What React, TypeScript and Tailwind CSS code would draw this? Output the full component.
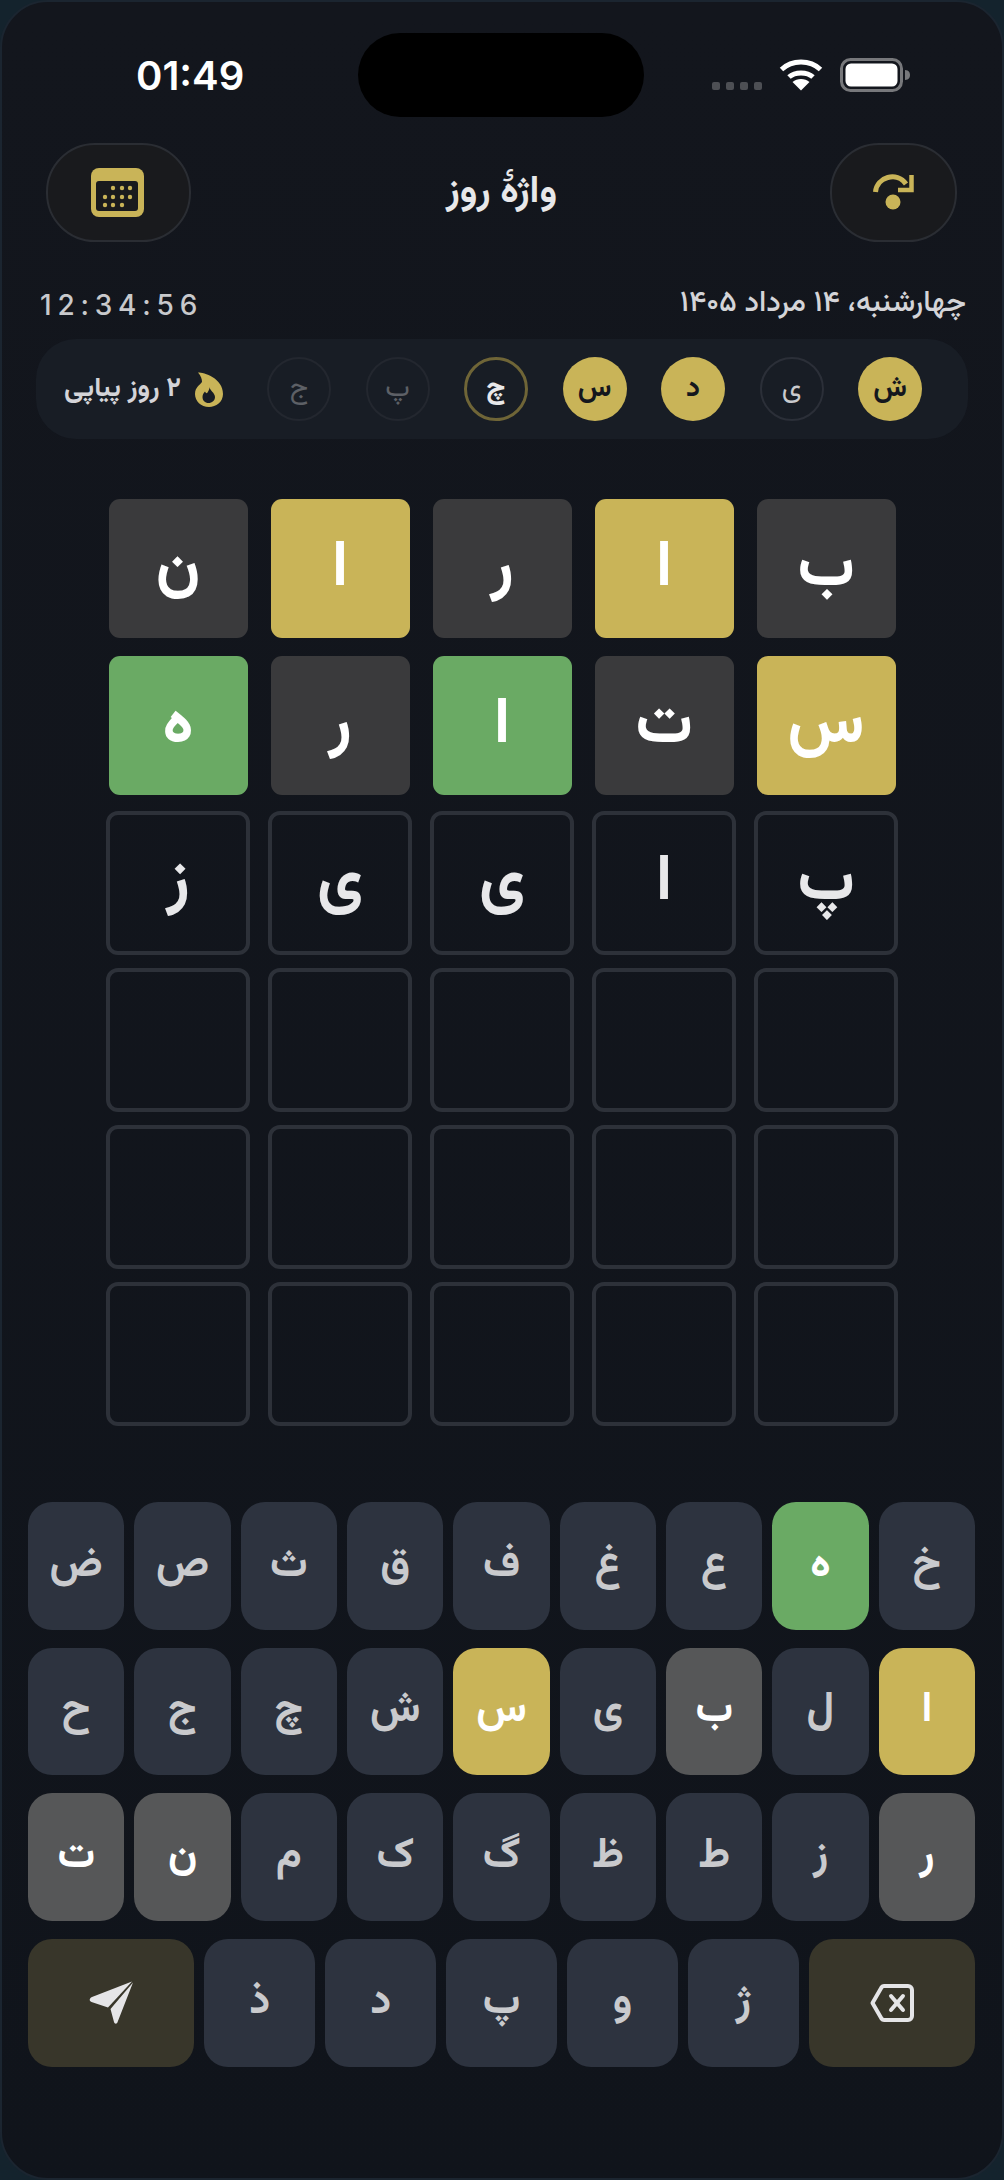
import React from "react";

const ARABIC = "font-['Vazirmatn','DejaVu_Sans',sans-serif]";

type TileKind = "absent" | "present" | "correct" | "typed" | "empty";
const rows: { l: string; k: TileKind }[][] = [
  [
    { l: "ب", k: "absent" },
    { l: "ا", k: "present" },
    { l: "ر", k: "absent" },
    { l: "ا", k: "present" },
    { l: "ن", k: "absent" },
  ],
  [
    { l: "س", k: "present" },
    { l: "ت", k: "absent" },
    { l: "ا", k: "correct" },
    { l: "ر", k: "absent" },
    { l: "ه", k: "correct" },
  ],
  [
    { l: "پ", k: "typed" },
    { l: "ا", k: "typed" },
    { l: "ی", k: "typed" },
    { l: "ی", k: "typed" },
    { l: "ز", k: "typed" },
  ],
  ...[0, 1, 2].map(() => [0, 1, 2, 3, 4].map(() => ({ l: "", k: "empty" as TileKind }))),
];

function Tile({ l, k }: { l: string; k: TileKind }) {
  if (k === "typed" || k === "empty") {
    return (
      <div className="flex h-[144px] w-[144px] items-center justify-center rounded-[12px] border-[4px] border-[#2d3139] text-[64px] leading-none font-bold text-[#e8e8ea]">
        {l}
      </div>
    );
  }
  const bg = k === "absent" ? "bg-[#3a3a3c]" : k === "present" ? "bg-[#c9b458]" : "bg-[#6aaa64]";
  return (
    <div className="flex h-[144px] w-[144px] items-center justify-center pb-[1px]">
      <div className={`flex h-[139px] w-[139px] items-center justify-center rounded-[11px] text-[64px] leading-none font-bold text-white ${bg}`}>
        {l}
      </div>
    </div>
  );
}

type KeyKind = "idle" | "absent" | "present" | "correct";
const kb: [string, KeyKind][][] = [
  [["خ", "idle"], ["ه", "correct"], ["ع", "idle"], ["غ", "idle"], ["ف", "idle"], ["ق", "idle"], ["ث", "idle"], ["ص", "idle"], ["ض", "idle"]],
  [["ا", "present"], ["ل", "idle"], ["ب", "absent"], ["ی", "idle"], ["س", "present"], ["ش", "idle"], ["چ", "idle"], ["ج", "idle"], ["ح", "idle"]],
  [["ر", "absent"], ["ز", "idle"], ["ط", "idle"], ["ظ", "idle"], ["گ", "idle"], ["ک", "idle"], ["م", "idle"], ["ن", "absent"], ["ت", "absent"]],
];

function Key({ l, k }: { l: string; k: KeyKind }) {
  const cls =
    k === "idle"
      ? "bg-[#2d333f] text-[#c9cacd]"
      : k === "absent"
        ? "bg-[#565758] text-white"
        : k === "present"
          ? "bg-[#c9b458] text-white"
          : "bg-[#6aaa64] text-white";
  return (
    <div className={`flex h-[127.5px] min-w-0 flex-1 items-center justify-center rounded-[24px] text-[42px] leading-none font-bold ${cls}`}>
      {l}
    </div>
  );
}

function Day({ l, s }: { l: string; s: "done" | "miss" | "today" | "future" }) {
  const cls =
    s === "done"
      ? "bg-[#c9b458] text-[#14171d] font-bold"
      : s === "miss"
        ? "border-2 border-[#2b2f38] text-[#c9cacd]"
        : s === "today"
          ? "border-[3px] border-[#6f6537] text-[#e8e8ea] font-bold"
          : "border-2 border-[#23272f] text-[#5d6066]";
  return (
    <div className={`flex h-[64px] w-[64px] shrink-0 items-center justify-center rounded-full text-[28px] leading-none ${cls}`}>
      {l}
    </div>
  );
}

export default function App() {
  return (
    <div className="h-[2180px] w-[1004px] bg-[#14232d]">
      <div
        dir="rtl"
        className={`flex h-[2180px] w-[1004px] flex-col overflow-hidden rounded-[48px] border-2 border-[#1b2530] bg-gradient-to-b from-[#13161d] to-[#10141b] ${ARABIC}`}
      >
        <div dir="ltr" className="mt-[31px] flex h-[84px] shrink-0 items-center">
          <div className="w-[356px] pl-[134px] pt-[1px] font-['Inter',sans-serif] text-[40px] leading-none font-semibold text-white">01:49</div>
          <div className="h-[84px] w-[286px] rounded-[42px] bg-black" />
          <div className="ml-[68px] flex items-start">
            <div className="mt-[24px] flex gap-[6px]">
              {[0, 1, 2, 3].map((i) => (
                <div key={i} className="h-[8px] w-[8px] rounded-[2px] bg-[#4d4f54]" />
              ))}
            </div>
            <svg width="44" height="33" viewBox="0 0 44 33" className="ml-[17px]">
              <path d="M2.5 11.5 C13 1.5 31 1.5 41.5 11.5" fill="none" stroke="#fff" strokeWidth="5" />
              <path d="M10 19 C16 13.5 28 13.5 34 19" fill="none" stroke="#fff" strokeWidth="5" />
              <path d="M13.5 24 C18 20 26 20 30.5 24 L22 32.5 Z" fill="#fff" />
            </svg>
            <svg width="72" height="34" viewBox="0 0 72 34" className="ml-[17px]">
              <rect x="1.5" y="1.5" width="60" height="31" rx="9" fill="none" stroke="#77787b" strokeWidth="3" />
              <rect x="5.5" y="5.5" width="52" height="23" rx="5.5" fill="#fff" />
              <path d="M65 12 C69 12 70 15 70 17 C70 19 69 22 65 22 Z" fill="#77787b" />
            </svg>
          </div>
        </div>

        <div dir="ltr" className="mt-[26px] flex h-[99px] shrink-0 items-center pr-[45px] pl-[44px]">
          <div className="flex flex-1 justify-start">
            <div className="flex h-[99px] w-[145px] items-center justify-center rounded-[49px] border-2 border-[#2a2d33] bg-[#191a1d] pr-[2px]">
              <svg width="53" height="49" viewBox="0 0 53 49">
                <rect width="53" height="49" rx="8" fill="#c9b458" />
                <rect x="5" y="13" width="42" height="30" rx="3" fill="#191a1d" />
                {[
                  [22, 20], [31, 20], [39, 20],
                  [14, 29], [22, 29], [31, 29], [39, 29],
                  [14, 37], [22, 37], [31, 37],
                ].map(([x, y]) => (
                  <circle key={`${x}-${y}`} cx={x} cy={y} r="2.2" fill="#c9b458" />
                ))}
              </svg>
            </div>
          </div>
          <div dir="rtl" className="text-[38px] leading-none font-bold text-[#e8e8ea]">واژهٔ روز</div>
          <div className="flex flex-1 justify-end">
            <div className="flex h-[99px] w-[127px] items-center justify-center rounded-[49px] border-2 border-[#2a2d33] bg-[#191a1d] pb-[2px]">
              <svg width="41" height="36" viewBox="0 0 41 36">
                <path d="M2.5 18 C3.5 3 24 -3 33 10" fill="none" stroke="#c9b458" strokeWidth="5" />
                <path d="M38.5 1 V16 H25" fill="none" stroke="#c9b458" strokeWidth="4.5" />
                <circle cx="20" cy="28" r="7.5" fill="#c9b458" />
              </svg>
            </div>
          </div>
        </div>

        <div className="flex h-[97px] shrink-0 items-center justify-between pr-[36px] pl-[38px] pt-[29px]">
          <div className="text-[29.6px] leading-none font-medium text-[#d4d4d8]">چهارشنبه، ۱۴ مرداد ۱۴۰۵</div>
          <div dir="ltr" className="font-['Inter',sans-serif] text-[28px] leading-none font-medium tracking-[5.8px] text-[#c8c9cc]">12:34:56</div>
        </div>

        <div className="mx-[34px] flex h-[100px] shrink-0 items-center rounded-[40px] bg-[#181d25] pr-[46px] pl-[28px]">
          <div className="flex gap-[34.5px]">
            <Day l="ش" s="done" />
            <Day l="ی" s="miss" />
            <Day l="د" s="done" />
            <Day l="س" s="done" />
            <Day l="چ" s="today" />
            <Day l="پ" s="future" />
            <Day l="ج" s="future" />
          </div>
          <div className="mr-auto flex items-center gap-[14px]">
            <svg width="28" height="35" viewBox="0 0 28 35">
              <path d="M3 0.5 C9 0.5 28 6 28 22 C28 30 21 35 14 35 C6 35 0 29 0 22 C0 15 5 13 7 10 C7 7 6 4 3 0.5 Z" fill="#c9b458" />
              <path d="M14.5 15 C14.5 18 20 21 20 25 C20 28.5 17 31 13.5 31 C10 31 7.5 28.5 7.5 25 C7.5 23 8.5 21 10 19.5 C11 21.5 12 21.5 12.5 20.5 C13.5 19 14.5 17 14.5 15 Z" fill="#181d25" />
            </svg>
            <div className="text-[27px] leading-none font-bold text-[#d4d4d8]">۲ روز پیاپی</div>
          </div>
        </div>

        <div className="mx-auto mt-[58px] grid w-[792px] shrink-0 grid-cols-5 gap-x-[18px] gap-y-[13px]">
          {rows.flat().map((t, i) => (
            <Tile key={i} l={t.l} k={t.k} />
          ))}
        </div>

        <div className="mt-[76px] flex flex-col gap-[18.2px] pr-[27px] pl-[26px]">
          {kb.map((row, i) => (
            <div key={i} className="flex gap-[10px]">
              {row.map(([l, k]) => (
                <Key key={l} l={l} k={k} />
              ))}
            </div>
          ))}
          <div className="flex gap-[10px]">
            <div className="flex h-[127.5px] flex-[1.5] items-center justify-center rounded-[24px] bg-[#38362a]">
              <svg width="44" height="38" viewBox="0 0 44 38" fill="none" stroke="#e5e5e7" strokeWidth="4" strokeLinecap="round" strokeLinejoin="round">
                <path d="M14 2 H38 A4 4 0 0 1 42 6 V32 A4 4 0 0 1 38 36 H14 A3 3 0 0 1 11.6 34.8 L2.5 19 L11.6 3.2 A3 3 0 0 1 14 2 Z" />
                <path d="M21 12 L33 26" />
                <path d="M33 12 L21 26" />
              </svg>
            </div>
            {["ژ", "و", "پ", "د", "ذ"].map((l) => (
              <Key key={l} l={l} k="idle" />
            ))}
            <div className="flex h-[127.5px] flex-[1.5] items-center justify-center rounded-[24px] bg-[#38362a]">
              <svg width="44" height="43" viewBox="0 0 44 43" fill="#e5e5e7">
                <path d="M43 0.5 L3 16 C0 17.5 0 20 2.5 21 L19 26.5 Z" />
                <path d="M44 1.5 L21.5 28 L25 41 C25.6 43.3 28 43.3 28.6 41 Z" />
              </svg>
            </div>
          </div>
        </div>
      </div>
    </div>
  );
}
